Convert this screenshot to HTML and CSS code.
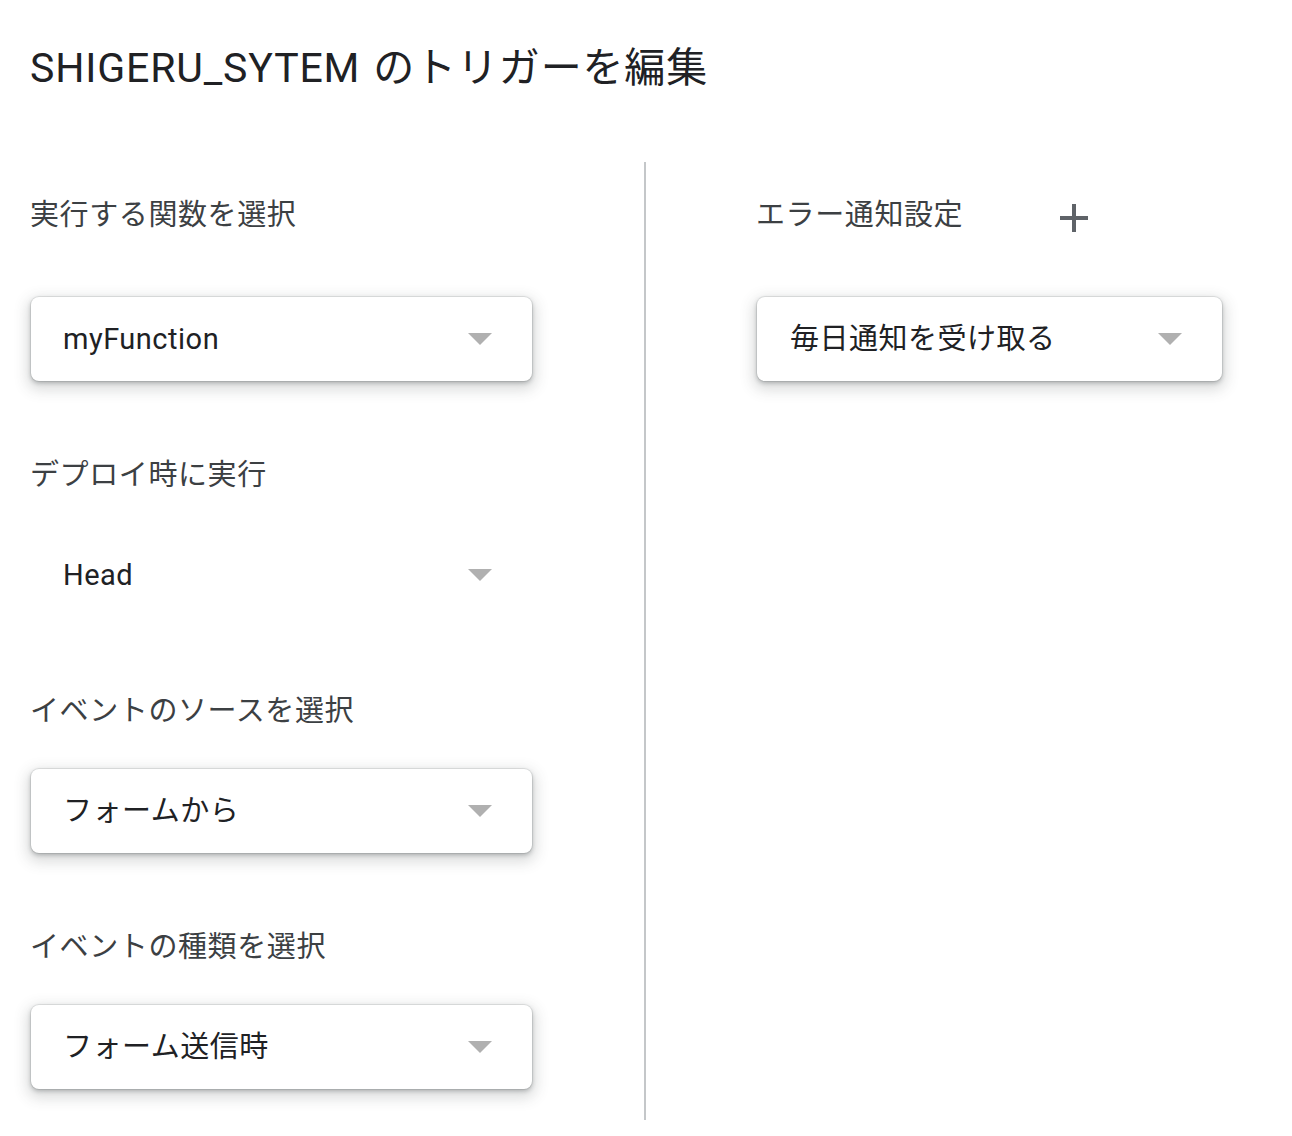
FILE: index.html
```html
<!DOCTYPE html>
<html lang="ja">
<head>
<meta charset="utf-8">
<title>SHIGERU_SYTEM のトリガーを編集</title>
<link rel="stylesheet" href="styles.css">
</head>
<body>
<div class="page">
  <h1 class="title">SHIGERU_SYTEM のトリガーを編集</h1>
  <div class="content">
    <div class="col-left">
      <div class="label first">実行する関数を選択</div>
      <div class="select card first-card">
        <span class="value">myFunction</span>
        <span class="arrow"></span>
      </div>

      <div class="label">デプロイ時に実行</div>
      <div class="select plain">
        <span class="value">Head</span>
        <span class="arrow"></span>
      </div>

      <div class="label">イベントのソースを選択</div>
      <div class="select card">
        <span class="value">フォームから</span>
        <span class="arrow"></span>
      </div>

      <div class="label">イベントの種類を選択</div>
      <div class="select card">
        <span class="value">フォーム送信時</span>
        <span class="arrow"></span>
      </div>
    </div>
    <div class="divider"></div>
    <div class="col-right">
      <div class="label first label-row">
        <span>エラー通知設定</span>
        <svg class="plus" width="28" height="28" viewBox="0 0 28 28" aria-hidden="true">
          <rect x="12" y="0" width="4" height="28" fill="#5f6368"/>
          <rect x="0" y="12" width="28" height="4" fill="#5f6368"/>
        </svg>
      </div>
      <div class="select card narrow first-card">
        <span class="value">毎日通知を受け取る</span>
        <span class="arrow"></span>
      </div>
    </div>
  </div>
</div>
</body>
</html>
```

FILE: styles.css
```css
html, body {
  margin: 0;
  padding: 0;
  background: #ffffff;
}

body {
  font-family: "Roboto", "Noto Sans CJK JP", sans-serif;
  color: #202124;
}

.page {
  padding-top: 44px;
}

.title {
  margin: 0 0 0 30px;
  font-size: 41px;
  line-height: 48px;
  font-weight: 400;
  color: #202124;
  letter-spacing: 0.85px;
  word-spacing: 2px;
}

.content {
  display: flex;
  margin-top: 70px;
  height: 958px;
}

.col-left {
  width: 644px;
  box-sizing: border-box;
  padding-left: 30px;
  display: flex;
  flex-direction: column;
  align-items: flex-start;
}

.divider {
  width: 2px;
  background: #c4c7c9;
  flex: none;
}

.col-right {
  padding-left: 110px;
  display: flex;
  flex-direction: column;
  align-items: flex-start;
}

.label {
  font-size: 29px;
  line-height: 40px;
  height: 40px;
  letter-spacing: 0.6px;
  color: #3c4043;
  margin-top: 74px;
}

.label.first {
  margin-top: 33px;
}

.label-row {
  display: flex;
  align-items: center;
}

.plus {
  margin-left: 97px;
  margin-top: 6px;
  flex: none;
}

.select {
  box-sizing: border-box;
  width: 501px;
  height: 84px;
  margin-left: 1px;
  margin-top: 38px;
  padding: 0 40px 0 32px;
  display: flex;
  align-items: center;
  justify-content: space-between;
  border-radius: 8px;
}

.select.first-card {
  margin-top: 62px;
}

.card {
  background: #ffffff;
  box-shadow: 0 0 0 1px rgba(60, 64, 67, 0.10),
              0 2px 4px 0 rgba(60, 64, 67, 0.32),
              0 5px 14px 4px rgba(60, 64, 67, 0.18);
}

.col-right .select {
  margin-left: 1px;
}

.narrow {
  width: 465px;
  padding-left: 33px;
}

.value {
  font-size: 29px;
  letter-spacing: 0.5px;
  color: #202124;
  line-height: 40px;
}

.arrow {
  width: 0;
  height: 0;
  border-left: 12px solid transparent;
  border-right: 12px solid transparent;
  border-top: 12px solid #b0b0b0;
  flex: none;
}
```
